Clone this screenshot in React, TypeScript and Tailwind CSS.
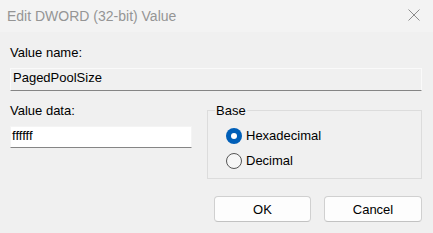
const Radio = ({ checked, label }: { checked: boolean; label: string }) => (
  <div className="flex items-center h-[17px] pl-[18px] gap-[4px]">
    {checked ? (
      <span className="w-[16px] h-[16px] rounded-full bg-[#005fb8] flex items-center justify-center">
        <span className="w-[6px] h-[6px] rounded-full bg-white" />
      </span>
    ) : (
      <span className="w-[16px] h-[16px] rounded-full border border-[#555555] bg-[#f6f6f6]" />
    )}
    <span className="text-[13px] leading-[15px] text-black">{label}</span>
  </div>
);

const App = () => {
  return (
    <div
      className="w-[433px] h-[233px] bg-[#f0f0f0] overflow-hidden flex flex-col"
      style={{ fontFamily: '"Liberation Sans", Arial, sans-serif' }}
    >
      {/* Title bar */}
      <div className="h-[32px] bg-[#f3f3f3] flex items-center justify-between pl-[7px] pr-[13px] shrink-0">
        <span className="text-[14px] leading-[17px] text-[#959595]">Edit DWORD (32-bit) Value</span>
        <svg width="12" height="12" viewBox="0 0 12 12" className="mb-[2px]">
          <path d="M0.5 0.5 L11.5 11.5 M11.5 0.5 L0.5 11.5" stroke="#8c8c8c" strokeWidth="1" fill="none" />
        </svg>
      </div>

      {/* Body */}
      <div className="flex flex-col pl-[10px] pr-[11px] pt-[13px] text-black">
        <span className="text-[13px] leading-[15px]">Value name:</span>
        <div className="mt-[8px] h-[23px] border border-[#fafafa] border-b-[#858585] bg-[#f0f0f0] px-[2px] pt-[1px] text-[13px] leading-[15px]">
          PagedPoolSize
        </div>

        <div className="mt-[12px] flex gap-[15px]">
          <div className="w-[182px] flex flex-col shrink-0">
            <span className="text-[13px] leading-[15px]">Value data:</span>
            <div className="mt-[8px] h-[22px] border border-[#f4f4f4] border-b-[#858585] bg-white px-[1px] pt-[1px] text-[13px] leading-[15px]">
              ffffff
            </div>
          </div>

          <fieldset className="flex-1 border border-[#dcdcdc] pt-[9px] pb-[9px] flex flex-col gap-[8px]">
            <legend className="ml-[7px] px-[1px] text-[13px] leading-[15px]">Base</legend>
            <Radio checked label="Hexadecimal" />
            <Radio checked={false} label="Decimal" />
          </fieldset>
        </div>

        <div className="mt-[17px] flex justify-end gap-[13px]">
          <button className="w-[97px] h-[26px] rounded-[4px] border border-[#d0d0d0] border-b-[#c2c2c2] bg-[#fdfdfd] text-[13px] leading-[15px] text-black">
            OK
          </button>
          <button className="w-[98px] h-[26px] rounded-[4px] border border-[#d0d0d0] border-b-[#c2c2c2] bg-[#fdfdfd] text-[13px] leading-[15px] text-black">
            Cancel
          </button>
        </div>
      </div>
    </div>
  );
};

export default App;
